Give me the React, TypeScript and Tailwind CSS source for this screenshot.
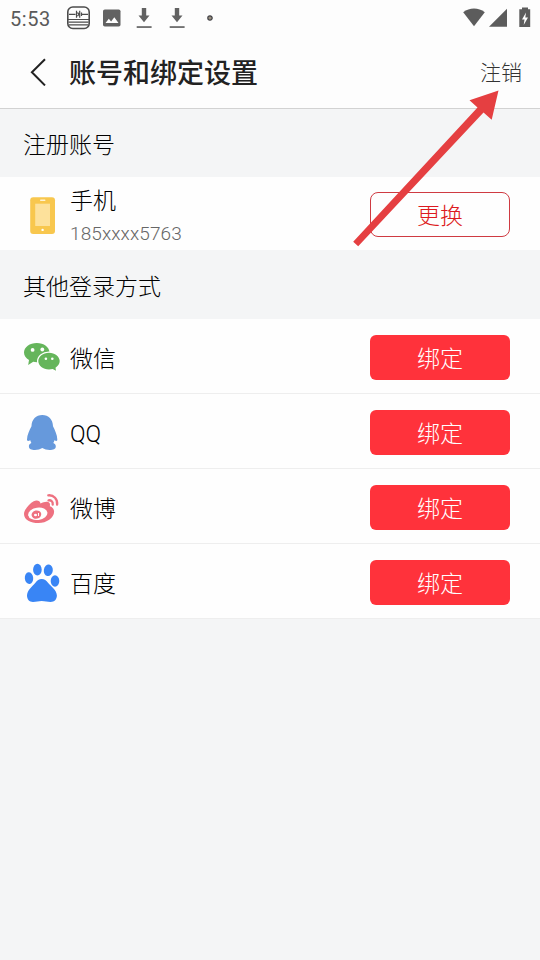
import React from 'react';

interface LoginMethod {
  id: string;
  label: string;
  icon: React.ReactNode;
}

const DownloadIcon = () => (
  <svg width="16" height="22" viewBox="0 0 16 22" fill="#626262">
    <path d="M5.800 1h4.400v7.500h3.300L8 15.200 2.500 8.500h3.300z" />
    <path d="M.7 19.200h14.900v1.700H.7z" />
  </svg>
);

const WechatIcon = () => (
  <svg width="36" height="45" viewBox="0 0 36 45" fill="#65b55b">
    <path d="M12.800 8C5.700 8 0 12.200 0 17.600c0 3.100 1.900 5.800 5 7.500l-.8 4.900 5-3.200c1.200.3 2.400.4 3.600.4 7 0 12.700-4.200 12.700-9.600S19.800 8 12.800 8z" />
    <path
      d="M25 17.700c-6 0-10.700 3.800-10.700 8.400s4.700 8.400 10.700 8.400c1.300 0 2.500-.2 3.700-.5l3.300 1.800-.5-3.100c2.500-1.500 4.200-3.900 4.200-6.600 0-4.600-4.700-8.400-10.700-8.400z"
      stroke="#fff"
      strokeWidth="2.600"
      paintOrder="stroke"
    />
    <g fill="#fff">
      <circle cx="8.600" cy="14.900" r="1.900" />
      <circle cx="18.300" cy="14.500" r="1.900" />
      <circle cx="21.900" cy="23.700" r="1.300" />
      <circle cx="28.300" cy="23.700" r="1.300" />
    </g>
  </svg>
);

const QQIcon = () => (
  <svg width="36" height="45" viewBox="0 0 36 45" fill="#6699dc">
    <path d="M18.300 5C12 5 7.700 9.500 7.500 16.200 5.500 20 3 25 3 29.500c0 1.800 1.200 1.600 3.300.8.300 1 .6 1.800 1.100 2.600-2 .7-2.600 2-2.500 3.500.1 2.600 2.600 3.500 6 3.500 3 0 5.200-.7 7.400-2 2.200 1.300 4.500 2 7.400 2 3.400 0 6-.9 6.100-3.500.1-1.500-.6-2.800-2.500-3.500.5-.8.9-1.600 1.100-2.600 1.900.8 2.900 1 2.900-.8 0-4.500-2.400-9.500-4.300-13.300C28.800 9.500 24.600 5 18.300 5z" />
  </svg>
);

const WeiboIcon = () => (
  <svg width="36" height="45" viewBox="0 0 36 45" fill="#ee7180">
    <path d="M9.700 16.200c2.600-1.300 6.600-.9 6.800 2.300 2.800-1.200 5.500-2.200 7.700-1.400 1.700.6 2.100 2 1.600 4.200 2.700.9 4.300 2.700 4.300 5.500 0 6-7.600 11.300-15.600 11.300C6.700 38.100 0 34.800 0 28.900c0-4 5.400-10.500 9.700-12.700z" />
    <ellipse cx="13.800" cy="28.800" rx="9.700" ry="6.200" fill="#fff" transform="rotate(-8 13.800 28.800)" />
    <ellipse cx="12.400" cy="29.600" rx="4.900" ry="4.100" transform="rotate(-12 12.400 29.600)" />
    <ellipse cx="11.500" cy="30" rx="1.500" ry="1.300" fill="#fff" />
    <path d="M14.500 28v3" stroke="#fff" strokeWidth="1" />
    <g fill="none" stroke="#ee7180" strokeWidth="2.300" strokeLinecap="round">
      <path d="M24.300 10.300c5.500-.5 9.500 3.900 8.800 9.400" />
      <path d="M24.500 15.300c2.800-.3 4.600 1.500 4.200 4.200" />
    </g>
  </svg>
);

const BaiduIcon = () => (
  <svg width="36" height="45" viewBox="0 0 36 45" fill="#3985f5">
    <ellipse cx="5" cy="18.100" rx="4.200" ry="5.900" transform="rotate(-5 5 18)" />
    <ellipse cx="13.400" cy="9.700" rx="4.300" ry="5.900" />
    <ellipse cx="24.300" cy="10.300" rx="4.500" ry="5.800" transform="rotate(8 24.300 10.300)" />
    <ellipse cx="31" cy="21" rx="4.300" ry="5.800" />
    <path d="M17.700 19c2.700 0 4.600 1.600 6.500 3.900 2.600 3.200 8.700 7 8.700 12.700 0 3.800-2.500 6.400-6.300 6.400-3.500 0-5.500-1-8.900-1s-5.200 1-8.700 1C5.300 42 3 39.400 3 35.600c0-5.700 5.600-9.500 8.200-12.700 1.900-2.300 3.800-3.900 6.500-3.900z" />
  </svg>
);

const PhoneIcon = () => (
  <svg width="36" height="45" viewBox="0 0 36 45">
    <rect x="6.200" y="5.200" width="24.800" height="36.800" rx="3" fill="#f8c74e" />
    <rect x="11.200" y="11.700" width="14.800" height="22.300" fill="#fde19b" />
    <rect x="16" y="7.500" width="5.500" height="1.500" rx=".7" fill="#fff3d4" />
    <circle cx="18.600" cy="37.900" r="1.200" fill="#fff" />
  </svg>
);

const METHODS: LoginMethod[] = [
  { id: 'wechat', label: '微信', icon: <WechatIcon /> },
  { id: 'qq', label: 'QQ', icon: <QQIcon /> },
  { id: 'weibo', label: '微博', icon: <WeiboIcon /> },
  { id: 'baidu', label: '百度', icon: <BaiduIcon /> },
];

const StatusBar = () => (
  <div className="h-[36px] pl-[10px] pr-[9px] flex items-center justify-between">
    <div className="flex items-center">
      <span className="w-[57px] pt-px font-['Roboto'] font-normal text-[20px] leading-none tracking-[0.6px] text-[#5a5a5a]">5:53</span>
      <svg width="23" height="24" viewBox="0 0 23 24" fill="none" stroke="#4c4c4c" strokeWidth="1.200">
        <rect x=".8" y="1" width="21.400" height="21.500" rx="5" strokeWidth="1.600" />
        <path d="M2 8.300h6.500M14.500 8.300h6.500M9.500 4.800v7M10.500 6.500l1.500 1.800-1.500 1.800M12.700 4.800v7M14.500 6.500v3.600" />
        <path d="M1 13.500h21M1.500 16.200h20M2 18.800h19" />
      </svg>
      <svg className="ml-[13px]" width="18" height="18" viewBox="0 0 18 18">
        <rect x="0" y=".5" width="17.500" height="17" rx="1.800" fill="#626262" />
        <path d="M2.500 14l3.300-4.300 2.300 2.700 3.200-4.200 4.200 5.800z" fill="#fff" />
      </svg>
      <div className="ml-[15px] flex gap-[17px]">
        <DownloadIcon />
        <DownloadIcon />
      </div>
      <svg className="ml-[22px]" width="6" height="6" viewBox="0 0 6 6">
        <circle cx="3" cy="3" r="2.200" fill="#999080" stroke="#404045" strokeWidth="1.200" />
      </svg>
    </div>
    <div className="flex items-center">
      <svg width="22" height="20" viewBox="0 0 22 20" fill="#5c5c5c">
        <path d="M11 18.200.2 4.300C6.500-.7 15.500-.7 21.800 4.300z" />
      </svg>
      <svg className="ml-[4px]" width="18" height="20" viewBox="0 0 18 20" fill="#5c5c5c">
        <path d="M18 .7v18H0z" />
      </svg>
      <svg className="ml-[12px]" width="12" height="22" viewBox="0 0 12 22">
        <path d="M3 .5h6v1.700h2.200V20H.3V2.200H3z" fill="#5c5c5c" />
        <path d="M7 5.500 3 12.500h2.500l-.8 5.500L9 10.500H6.300z" fill="#fff" />
      </svg>
    </div>
  </div>
);

const SectionTitle = ({ children }: { children: React.ReactNode }) => (
  <div className="pl-[23px] flex items-center bg-[#f4f5f6] text-[23px]">{children}</div>
);

export default function App() {
  return (
    <div className="relative w-full h-[960px] overflow-hidden bg-[#f4f5f6] font-['Noto_Sans_CJK_SC',sans-serif] font-light text-black">
      <div className="bg-[#fdfdfd]">
        <StatusBar />
        <header className="h-[73px] pb-[1px] pl-[30px] pr-[18px] flex items-center border-b border-[#d2d2d2]">
          <svg width="16" height="28" viewBox="0 0 16 28" fill="none" stroke="#222" strokeWidth="2">
            <path d="M15 1.200 1.900 14.300 15 27.400" />
          </svg>
          <h1 className="ml-[23px] pb-px text-[27px] leading-none font-medium text-[#222]">账号和绑定设置</h1>
          <button className="ml-auto text-[21px] leading-none text-[#333]">注销</button>
        </header>
      </div>

      <div className="grid h-[68px]">
        <SectionTitle>注册账号</SectionTitle>
      </div>
      <div className="h-[73px] pt-[2px] pl-[24px] pr-[30px] flex items-center bg-[#fefefe]">
        <PhoneIcon />
        <div className="ml-[10px] pt-[7px] flex flex-col">
          <span className="text-[23px] leading-[32px]">手机</span>
          <span className="font-['Roboto'] text-[19px] leading-[38px] tracking-[0.1px] text-[#666]">185xxxx5763</span>
        </div>
        <button className="ml-auto w-[140px] h-[45px] rounded-[8px] border border-[#cf3b42] text-[23px] leading-none text-[#dd1a20]">
          更换
        </button>
      </div>

      <div className="grid h-[69px] pt-[2px]">
        <SectionTitle>其他登录方式</SectionTitle>
      </div>
      <div>
        {METHODS.map((method) => (
          <div key={method.id} className="h-[75px] pt-[2px] pl-[24px] pr-[30px] flex items-center bg-[#fefefe] border-b border-[#eeeeee]">
            {method.icon}
            <span className="ml-[10px] pt-[5px] font-['Roboto','Noto_Sans_CJK_SC',sans-serif] text-[23px] leading-none">{method.label}</span>
            <button className="ml-auto w-[140px] h-[45px] rounded-[6px] bg-[#ff323b] text-[23px] leading-none text-white">
              绑定
            </button>
          </div>
        ))}
      </div>

      {/* Arrow pointing at the 注销 action */}
      <svg className="absolute left-0 top-0 pointer-events-none" width="540" height="260" viewBox="0 0 540 260">
        <path d="M498.500 90.500 469.500 100.300 477.500 107.500 353.200 241.800 358.200 246.200 483.500 112.500 491.700 119.800z" fill="#e53f41" />
      </svg>
    </div>
  );
}
